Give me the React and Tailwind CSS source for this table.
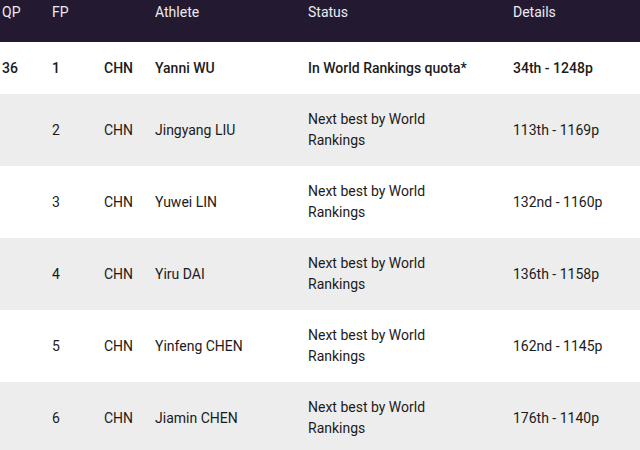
const rows = [
  { qp: "36", fp: "1", nat: "CHN", name: "Yanni WU", status: "In World Rankings quota*", details: "34th - 1248p", bold: true },
  { qp: "", fp: "2", nat: "CHN", name: "Jingyang LIU", status: "Next best by World Rankings", details: "113th - 1169p" },
  { qp: "", fp: "3", nat: "CHN", name: "Yuwei LIN", status: "Next best by World Rankings", details: "132nd - 1160p" },
  { qp: "", fp: "4", nat: "CHN", name: "Yiru DAI", status: "Next best by World Rankings", details: "136th - 1158p" },
  { qp: "", fp: "5", nat: "CHN", name: "Yinfeng CHEN", status: "Next best by World Rankings", details: "162nd - 1145p" },
  { qp: "", fp: "6", nat: "CHN", name: "Jiamin CHEN", status: "Next best by World Rankings", details: "176th - 1140p" },
];

function Row({ className, cells }) {
  return (
    <div className={`flex pl-[2px] ${className}`}>
      <span className="w-[50px] shrink-0">{cells[0]}</span>
      <span className="w-[52px] shrink-0">{cells[1]}</span>
      <span className="w-[51px] shrink-0">{cells[2]}</span>
      <span className="w-[153px] shrink-0">{cells[3]}</span>
      <span className="w-[205px] shrink-0 pr-[40px]">{cells[4]}</span>
      <span className="flex-1">{cells[5]}</span>
    </div>
  );
}

export default function App() {
  return (
    <div className="w-[640px] h-[450px] overflow-hidden bg-white text-[14px] text-[#1b1b1b] font-['Roboto','Liberation_Sans',sans-serif]">
      <Row
        className="h-[42px] bg-[#231a31] text-[#ecebf0] leading-[22px] pt-[1px]"
        cells={["QP", "FP", "", "Athlete", "Status", "Details"]}
      />
      {rows.map((r, i) => (
        <Row
          key={i}
          className={`items-center leading-[21px] ${i % 2 ? "bg-[#ededed]" : "bg-white"} ${r.bold ? "h-[52px] font-medium" : "h-[72px]"}`}
          cells={[r.qp, r.fp, r.nat, r.name, r.status, r.details]}
        />
      ))}
    </div>
  );
}
